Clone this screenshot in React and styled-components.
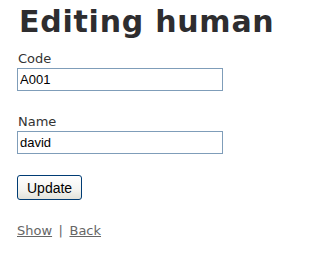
import React from "react";
import styled, { createGlobalStyle } from "styled-components";

const GlobalStyle = createGlobalStyle`
  html, body {
    margin: 0;
    padding: 0;
    background: #fff;
  }
  body {
    padding: 0 17px;
    font-family: "DejaVu Sans", Verdana, sans-serif;
    color: #333;
  }
`;

const Title = styled.h1`
  margin: 4px 0 12px 2px;
  font-size: 30px;
  line-height: 35px;
  font-weight: bold;
  letter-spacing: 0.75px;
  color: #2e2d2f;
  white-space: nowrap;
`;

const Field = styled.div`
  display: flex;
  flex-direction: column;
  gap: 2px;
  margin-bottom: ${p => p.$spacing || 23}px;
`;

const Label = styled.label`
  margin-left: 1px;
  font-size: 13px;
  line-height: 15px;
  color: #333;
`;

const TextInput = styled.input`
  box-sizing: border-box;
  width: 206px;
  height: 23px;
  margin: 0;
  padding: 0 2px;
  border: 1px solid #7f9db9;
  font-family: "Liberation Sans", Arial, sans-serif;
  font-size: 13px;
  color: #000;
  background: #fff;
  outline: none;
`;

const Actions = styled.div`
  margin-bottom: 23px;
`;

const Button = styled.button`
  box-sizing: border-box;
  height: 25px;
  padding: 0 9px;
  border: 1px solid #003c74;
  border-radius: 3px;
  background: linear-gradient(#ffffff, #f4f4f0 60%, #e2e2da);
  font-family: "Liberation Sans", Arial, sans-serif;
  font-size: 14px;
  color: #000;
`;

const Links = styled.p`
  margin: 0;
  font-size: 13px;
  line-height: 15px;
  color: #666;
`;

const Link = styled.a`
  color: #666;
  text-decoration: underline;
`;

const Sep = styled.span`
  margin: 0 6.5px;
`;

export default function App() {
  return (
    <>
      <GlobalStyle />
      <Title>Editing human</Title>
      <form onSubmit={e => e.preventDefault()}>
        <Field>
          <Label htmlFor="human_code">Code</Label>
          <TextInput id="human_code" defaultValue="A001" />
        </Field>
        <Field $spacing={21}>
          <Label htmlFor="human_name">Name</Label>
          <TextInput id="human_name" defaultValue="david" />
        </Field>
        <Actions>
          <Button type="submit">Update</Button>
        </Actions>
      </form>
      <Links>
        <Link href="#show">Show</Link>
        <Sep>|</Sep>
        <Link href="#back">Back</Link>
      </Links>
    </>
  );
}
